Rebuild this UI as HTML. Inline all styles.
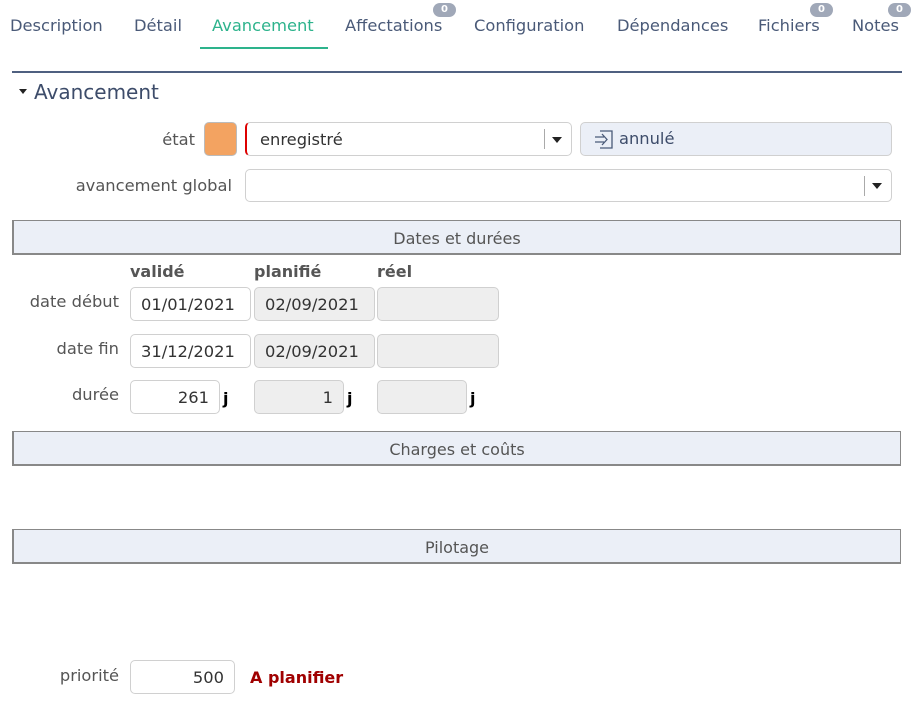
<!DOCTYPE html>
<html><head><meta charset="utf-8"><style>
*{box-sizing:border-box;margin:0;padding:0}
body{width:919px;height:708px;background:#fff;font-family:"DejaVu Sans","Liberation Sans",sans-serif;color:#555;position:relative;overflow:hidden}
.a{position:absolute;white-space:nowrap}
.tab{font-size:16.3px;color:#4a5a78;top:16px}
.badge{position:absolute;background:#a0a8b8;color:#fff;font-size:10px;font-weight:bold;border-radius:7px;width:23px;height:14px;text-align:center;line-height:14px}
.lbl{font-size:16.3px;color:#555;text-align:right}
.in{position:absolute;border:1px solid #d0d0d0;border-radius:5px;background:#fff;font-size:16.3px;color:#333;padding:0 10px;line-height:34px}
.ro{background:#eee}
.sec{position:absolute;left:12px;width:889px;height:35px;background:#ebeff7;border:2px solid #888;border-top-width:1px;border-right-width:1px;text-align:center;font-size:16px;color:#555;line-height:35px}
.hd{font-size:16px;font-weight:bold;color:#555;top:262px}
.j{font-size:16px;color:#000;font-weight:bold}
</style></head><body>
<div class="a tab" style="left:10px">Description</div>
<div class="a tab" style="left:134px">Détail</div>
<div class="a tab" style="left:212px;color:#2db38c">Avancement</div>
<div class="a" style="left:200px;top:47px;width:128px;height:2px;background:#2db38c"></div>
<div class="a tab" style="left:345px">Affectations</div>
<div class="badge" style="left:433px;top:3px">0</div>
<div class="a tab" style="left:474px">Configuration</div>
<div class="a tab" style="left:617px">Dépendances</div>
<div class="a tab" style="left:758px">Fichiers</div>
<div class="badge" style="left:810px;top:3px">0</div>
<div class="a tab" style="left:852px">Notes</div>
<div class="badge" style="left:888px;top:3px">0</div>
<div class="a" style="left:12px;top:71px;width:890px;height:2px;background:#4f6080"></div>
<div class="a" style="left:19px;top:89px;width:0;height:0;border-left:4px solid transparent;border-right:4px solid transparent;border-top:5px solid #222"></div>
<div class="a" style="left:34px;top:80px;font-size:20px;color:#3d4c6a">Avancement</div>

<div class="a lbl" style="left:100px;width:95px;top:130px">état</div>
<div class="a" style="left:204px;top:122px;width:33px;height:34px;background:#f3a361;border:1px solid #bbb;border-radius:5px"></div>
<div class="in" style="left:245px;top:122px;width:327px;height:34px;border-left:2px solid #d00;line-height:34px;padding-left:13px">enregistré
 <span class="a" style="left:297px;top:6px;width:1px;height:20px;background:#aaa"></span>
 <span class="a" style="left:305px;top:14px;border-left:5px solid transparent;border-right:5px solid transparent;border-top:6px solid #222"></span></div>
<div class="in" style="left:580px;top:122px;width:312px;height:34px;background:#ebeff7;color:#3d4c6a;line-height:32px;padding-left:38px">annulé
 <svg class="a" style="left:13px;top:7px" width="20" height="19" viewBox="0 0 20 19" fill="none" stroke="#4a5a78" stroke-width="1.3"><path d="M6 1H18V18H6M1 7h9M1 12h9M8 4l5 5.5-5 5.5"/></svg></div>

<div class="a lbl" style="left:30px;width:202px;top:176px">avancement global</div>
<div class="in" style="left:245px;top:169px;width:647px;height:33px">
 <span class="a" style="left:618px;top:6px;width:1px;height:20px;background:#aaa"></span>
 <span class="a" style="left:626px;top:13px;border-left:5px solid transparent;border-right:5px solid transparent;border-top:6px solid #222"></span></div>

<div class="sec" style="top:220px">Dates et durées</div>
<div class="a hd" style="left:130px">validé</div>
<div class="a hd" style="left:254px">planifié</div>
<div class="a hd" style="left:377px">réel</div>

<div class="a lbl" style="left:10px;width:109px;top:292px">date début</div>
<div class="in" style="left:130px;top:287px;width:121px;height:34px">01/01/2021</div>
<div class="in ro" style="left:254px;top:287px;width:121px;height:34px">02/09/2021</div>
<div class="in ro" style="left:377px;top:287px;width:122px;height:34px"></div>

<div class="a lbl" style="left:10px;width:109px;top:339px">date fin</div>
<div class="in" style="left:130px;top:334px;width:121px;height:34px">31/12/2021</div>
<div class="in ro" style="left:254px;top:334px;width:121px;height:34px">02/09/2021</div>
<div class="in ro" style="left:377px;top:334px;width:122px;height:34px"></div>

<div class="a lbl" style="left:10px;width:109px;top:385px">durée</div>
<div class="in" style="left:130px;top:380px;width:90px;height:34px;text-align:right">261</div>
<div class="a j" style="left:223px;top:389px">j</div>
<div class="in ro" style="left:254px;top:380px;width:90px;height:34px;text-align:right">1</div>
<div class="a j" style="left:347px;top:389px">j</div>
<div class="in ro" style="left:377px;top:380px;width:90px;height:34px"></div>
<div class="a j" style="left:470px;top:389px">j</div>

<div class="sec" style="top:431px">Charges et coûts</div>
<div class="sec" style="top:529px">Pilotage</div>

<div class="a lbl" style="left:10px;width:109px;top:666px">priorité</div>
<div class="in" style="left:130px;top:660px;width:105px;height:34px;text-align:right">500</div>
<div class="a" style="left:250px;top:668px;font-size:16px;font-weight:bold;color:#a00000">A planifier</div>
</body></html>
